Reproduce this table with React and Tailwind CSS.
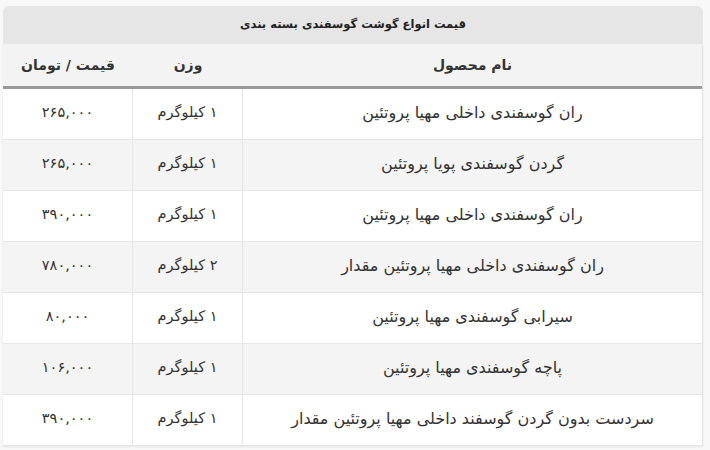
const rows = [
  { name: "ران گوسفندی داخلی مهیا پروتئین", weight: "۱ کیلوگرم", price: "۲۶۵,۰۰۰" },
  { name: "گردن گوسفندی پویا پروتئین", weight: "۱ کیلوگرم", price: "۲۶۵,۰۰۰" },
  { name: "ران گوسفندی داخلی مهیا پروتئین", weight: "۱ کیلوگرم", price: "۳۹۰,۰۰۰" },
  { name: "ران گوسفندی داخلی مهیا پروتئین مقدار", weight: "۲ کیلوگرم", price: "۷۸۰,۰۰۰" },
  { name: "سیرابی گوسفندی مهیا پروتئین", weight: "۱ کیلوگرم", price: "۸۰,۰۰۰" },
  { name: "پاچه گوسفندی مهیا پروتئین", weight: "۱ کیلوگرم", price: "۱۰۶,۰۰۰" },
  { name: "سردست بدون گردن گوسفند داخلی مهیا پروتئین مقدار", weight: "۱ کیلوگرم", price: "۳۹۰,۰۰۰" },
];

export default function App() {
  return (
    <div
      dir="rtl"
      className="w-[710px] h-[450px] bg-[#f8f8f8] pr-[7px] pl-[3px] pt-[6px] text-[#333] [font-family:'DejaVu_Sans','Noto_Sans',sans-serif]"
    >
      <div className="w-[700px] h-[38px] rounded-t-[6px] bg-[#e6e6e6] flex items-center justify-center text-[11.5px] font-bold text-[#222]">
        قیمت انواع گوشت گوسفندی بسته بندی
      </div>
      <div className="w-[700px] bg-white border-r border-[#e2e2e2] shadow-[0_1px_2px_rgba(0,0,0,0.08)]">
        <div className="grid grid-cols-[459px_110px_130px] h-[45px] bg-[#f3f3f3] border-b-[3px] border-[#999] text-[14px] font-bold items-center text-center">
          <div>نام محصول</div>
          <div>وزن</div>
          <div>قیمت / تومان</div>
        </div>
        {rows.map((r, i) => (
          <div
            key={i}
            className={`grid grid-cols-[459px_110px_130px] h-[51px] text-[14.5px] text-center border-b border-[#e6e6e6] ${
              i % 2 === 1 ? "bg-[#f4f4f4]" : "bg-white"
            }`}
          >
            <div className="flex items-center justify-center pb-[3px] text-[16px]">{r.name}</div>
            <div className="flex items-center justify-center pb-[3px] border-r border-[#e6e6e6]">{r.weight}</div>
            <div className="flex items-center justify-center pb-[3px] border-r border-[#e6e6e6]">{r.price}</div>
          </div>
        ))}
      </div>
    </div>
  );
}
